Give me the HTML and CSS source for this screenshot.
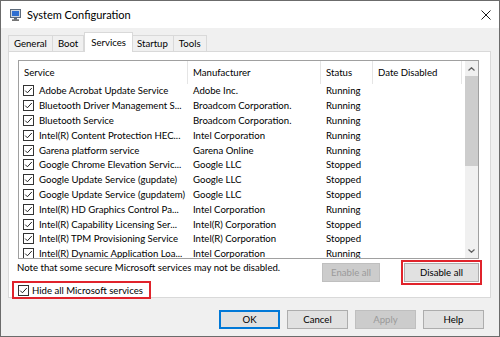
FILE: index.html
```html
<!DOCTYPE html>
<html>
<head>
<meta charset="utf-8">
<link rel="stylesheet" href="styles.css">
</head>
<body>
<div class="window">
  <div class="titlebar">
    <svg class="app-icon" viewBox="0 0 11 12"><rect x="0.5" y="0.5" width="10" height="8" fill="#cfd7df" stroke="#5d6b7b"/><rect x="2" y="2" width="7" height="5" fill="#2f6fd0"/><rect x="4" y="9" width="3" height="1.5" fill="#5d6b7b"/><rect x="2" y="10.5" width="7" height="1.2" fill="#3a3a3a"/></svg>
    <span class="title">System Configuration</span>
    <svg class="close" viewBox="0 0 10 10"><path d="M0.5 0.5L9.5 9.5M9.5 0.5L0.5 9.5" stroke="#1a1a1a" stroke-width="1"/></svg>
  </div>
  <div class="tabs">
    <div class="tab">General</div>
    <div class="tab">Boot</div>
    <div class="tab active">Services</div>
    <div class="tab">Startup</div>
    <div class="tab">Tools</div>
  </div>
  <div class="panel">
    <div class="list">
      <div class="list-body">
        <div class="lv-row lv-head">
          <div class="cell">Service</div>
          <div class="cell">Manufacturer</div>
          <div class="cell">Status</div>
          <div class="cell">Date Disabled</div>
          <div class="cell filler"></div>
        </div>
        <div class="lv-row lv-item"><div class="cell svc"><svg class="cb" viewBox="0 0 11 11"><rect x="0.5" y="0.5" width="10" height="10" fill="#fff" stroke="#333"/><path d="M2.2 5.6L4.4 7.8L8.8 3" fill="none" stroke="#222"/></svg>Adobe Acrobat Update Service</div><div class="cell">Adobe Inc.</div><div class="cell">Running</div><div class="cell"></div></div>
        <div class="lv-row lv-item"><div class="cell svc"><svg class="cb" viewBox="0 0 11 11"><rect x="0.5" y="0.5" width="10" height="10" fill="#fff" stroke="#333"/><path d="M2.2 5.6L4.4 7.8L8.8 3" fill="none" stroke="#222"/></svg>Bluetooth Driver Management S...</div><div class="cell">Broadcom Corporation.</div><div class="cell">Running</div><div class="cell"></div></div>
        <div class="lv-row lv-item"><div class="cell svc"><svg class="cb" viewBox="0 0 11 11"><rect x="0.5" y="0.5" width="10" height="10" fill="#fff" stroke="#333"/><path d="M2.2 5.6L4.4 7.8L8.8 3" fill="none" stroke="#222"/></svg>Bluetooth Service</div><div class="cell">Broadcom Corporation.</div><div class="cell">Running</div><div class="cell"></div></div>
        <div class="lv-row lv-item"><div class="cell svc"><svg class="cb" viewBox="0 0 11 11"><rect x="0.5" y="0.5" width="10" height="10" fill="#fff" stroke="#333"/><path d="M2.2 5.6L4.4 7.8L8.8 3" fill="none" stroke="#222"/></svg>Intel(R) Content Protection HEC...</div><div class="cell">Intel Corporation</div><div class="cell">Running</div><div class="cell"></div></div>
        <div class="lv-row lv-item"><div class="cell svc"><svg class="cb" viewBox="0 0 11 11"><rect x="0.5" y="0.5" width="10" height="10" fill="#fff" stroke="#333"/><path d="M2.2 5.6L4.4 7.8L8.8 3" fill="none" stroke="#222"/></svg>Garena platform service</div><div class="cell">Garena Online</div><div class="cell">Running</div><div class="cell"></div></div>
        <div class="lv-row lv-item"><div class="cell svc"><svg class="cb" viewBox="0 0 11 11"><rect x="0.5" y="0.5" width="10" height="10" fill="#fff" stroke="#333"/><path d="M2.2 5.6L4.4 7.8L8.8 3" fill="none" stroke="#222"/></svg>Google Chrome Elevation Servic...</div><div class="cell">Google LLC</div><div class="cell">Stopped</div><div class="cell"></div></div>
        <div class="lv-row lv-item"><div class="cell svc"><svg class="cb" viewBox="0 0 11 11"><rect x="0.5" y="0.5" width="10" height="10" fill="#fff" stroke="#333"/><path d="M2.2 5.6L4.4 7.8L8.8 3" fill="none" stroke="#222"/></svg>Google Update Service (gupdate)</div><div class="cell">Google LLC</div><div class="cell">Stopped</div><div class="cell"></div></div>
        <div class="lv-row lv-item"><div class="cell svc"><svg class="cb" viewBox="0 0 11 11"><rect x="0.5" y="0.5" width="10" height="10" fill="#fff" stroke="#333"/><path d="M2.2 5.6L4.4 7.8L8.8 3" fill="none" stroke="#222"/></svg>Google Update Service (gupdatem)</div><div class="cell">Google LLC</div><div class="cell">Stopped</div><div class="cell"></div></div>
        <div class="lv-row lv-item"><div class="cell svc"><svg class="cb" viewBox="0 0 11 11"><rect x="0.5" y="0.5" width="10" height="10" fill="#fff" stroke="#333"/><path d="M2.2 5.6L4.4 7.8L8.8 3" fill="none" stroke="#222"/></svg>Intel(R) HD Graphics Control Pa...</div><div class="cell">Intel Corporation</div><div class="cell">Running</div><div class="cell"></div></div>
        <div class="lv-row lv-item"><div class="cell svc"><svg class="cb" viewBox="0 0 11 11"><rect x="0.5" y="0.5" width="10" height="10" fill="#fff" stroke="#333"/><path d="M2.2 5.6L4.4 7.8L8.8 3" fill="none" stroke="#222"/></svg>Intel(R) Capability Licensing Ser...</div><div class="cell">Intel(R) Corporation</div><div class="cell">Stopped</div><div class="cell"></div></div>
        <div class="lv-row lv-item"><div class="cell svc"><svg class="cb" viewBox="0 0 11 11"><rect x="0.5" y="0.5" width="10" height="10" fill="#fff" stroke="#333"/><path d="M2.2 5.6L4.4 7.8L8.8 3" fill="none" stroke="#222"/></svg>Intel(R) TPM Provisioning Service</div><div class="cell">Intel(R) Corporation</div><div class="cell">Stopped</div><div class="cell"></div></div>
        <div class="lv-row lv-item"><div class="cell svc"><svg class="cb" viewBox="0 0 11 11"><rect x="0.5" y="0.5" width="10" height="10" fill="#fff" stroke="#333"/><path d="M2.2 5.6L4.4 7.8L8.8 3" fill="none" stroke="#222"/></svg>Intel(R) Dynamic Application Loa...</div><div class="cell">Intel Corporation</div><div class="cell">Running</div><div class="cell"></div></div>
      </div>
      <div class="scrollbar">
        <div class="sb-btn"><svg width="7" height="4" viewBox="0 0 7 4"><path d="M0.5 3.5L3.5 0.7L6.5 3.5" fill="none" stroke="#606060" stroke-width="1.2"/></svg></div>
        <div class="sb-thumb"></div>
        <div class="sb-track"></div>
        <div class="sb-btn"><svg width="7" height="4" viewBox="0 0 7 4"><path d="M0.5 0.5L3.5 3.3L6.5 0.5" fill="none" stroke="#606060" stroke-width="1.2"/></svg></div>
      </div>
    </div>
    <div class="actions">
      <div class="actions-left">
        <p class="note">Note that some secure Microsoft services may not be disabled.</p>
        <label class="hide-all"><svg class="cb" viewBox="0 0 11 11"><rect x="0.5" y="0.5" width="10" height="10" fill="#fff" stroke="#333"/><path d="M2.2 5.6L4.4 7.8L8.8 3" fill="none" stroke="#222"/></svg>Hide all Microsoft services</label>
      </div>
      <div class="actions-right">
        <button class="btn disabled">Enable all</button>
        <button class="btn btn-wide marked">Disable all</button>
      </div>
    </div>
  </div>
  <div class="footer">
    <button class="btn default">OK</button>
    <button class="btn">Cancel</button>
    <button class="btn disabled">Apply</button>
    <button class="btn">Help</button>
  </div>
</div>
</body>
</html>
```
FILE: styles.css
```css
body {
  margin: 0;
  background: #fff;
  font-family: "Segoe UI", Lato, "Liberation Sans", sans-serif;
  font-size: 9.6px;
  color: #000;
}
.window {
  width: 500px;
  height: 337px;
  box-sizing: border-box;
  border: 1px solid #6b6b6b;
  background: #f0f0f0;
  overflow: hidden;
}
.titlebar {
  height: 27px;
  background: #fff;
  display: flex;
  align-items: center;
  padding: 0 8px 0 9px;
}
.app-icon {
  width: 11px;
  height: 12px;
  margin-right: 6px;
}
.title {
  flex: 1;
  font-size: 11px;
}
.close {
  width: 10px;
  height: 10px;
}
.tabs {
  display: flex;
  align-items: flex-end;
  height: 20px;
  margin: 4px 0 -1px 7px;
  position: relative;
  z-index: 1;
}
.tab {
  height: 16px;
  margin-bottom: 1px;
  box-sizing: border-box;
  border: 1px solid #d9d9d9;
  border-bottom: 0;
  padding: 0 5px;
  display: flex;
  align-items: center;
  background: #f0f0f0;
}
.tab + .tab {
  margin-left: -1px;
}
.tab.active {
  height: 20px;
  margin: 0 -1px 0 0;
  padding: 0 6px;
  background: #fff;
  position: relative;
  z-index: 1;
}
.panel {
  height: 247px;
  box-sizing: border-box;
  margin: 0 8px 0 7px;
  border: 1px solid #d9d9d9;
  background: #fff;
  padding: 8px 11px 0 9px;
}
.list {
  display: flex;
  height: 199px;
  box-sizing: border-box;
  border: 1px solid #a0a0a0;
  background: #fff;
}
.list-body {
  flex: 1;
  overflow: hidden;
}
.lv-row {
  display: grid;
  grid-template-columns: 169px 133px 52px 89px 1fr;
}
.lv-head {
  height: 22.6px;
}
.lv-head .cell {
  border-right: 1px solid #e5e5e5;
  display: flex;
  align-items: center;
  padding-left: 5px;
}
.lv-head .filler {
  border-right: 0;
}
.lv-item {
  height: 14.8px;
  align-items: center;
}
.cell {
  white-space: nowrap;
  overflow: hidden;
  padding-left: 5px;
  min-width: 0;
}
.lv-item .svc {
  padding-left: 4px;
  display: flex;
  align-items: center;
  gap: 5px;
}
.cb {
  width: 11px;
  height: 11px;
  flex: none;
}
.scrollbar {
  width: 13px;
  display: flex;
  flex-direction: column;
  background: #f0f0f0;
}
.sb-btn {
  height: 15px;
  display: flex;
  align-items: center;
  justify-content: center;
}
.sb-thumb {
  height: 90px;
  background: #cdcdcd;
}
.sb-track {
  flex: 1;
}
.actions {
  display: flex;
  justify-content: space-between;
  align-items: flex-start;
}
.note {
  margin: 3px 0 0 -1px;
  line-height: 12px;
}
.hide-all {
  display: flex;
  align-items: center;
  gap: 3px;
  width: max-content;
  height: 18px;
  box-sizing: border-box;
  border: 2px solid #e0232b;
  margin: 7px 0 0 -6px;
  padding: 0 6px 0 4px;
}
.actions-right {
  display: flex;
  gap: 24px;
  margin-top: 4px;
}
.btn {
  width: 58px;
  height: 19px;
  box-sizing: border-box;
  border: 1px solid #adadad;
  background: #e1e1e1;
  font: inherit;
  color: #000;
  padding: 0;
}
.btn-wide {
  width: 75px;
}
.btn.disabled {
  background: #cccccc;
  border-color: #bfbfbf;
  color: #9a9a9a;
}
.marked {
  outline: 2px solid #e0232b;
  outline-offset: 1px;
}
.footer {
  display: flex;
  justify-content: flex-end;
  gap: 7px;
  padding: 12px 15px 0 0;
}
.footer .btn {
  width: 61px;
}
.btn.default {
  border-color: #0078d7;
  box-shadow: inset 0 0 0 1px #0078d7;
}
```
